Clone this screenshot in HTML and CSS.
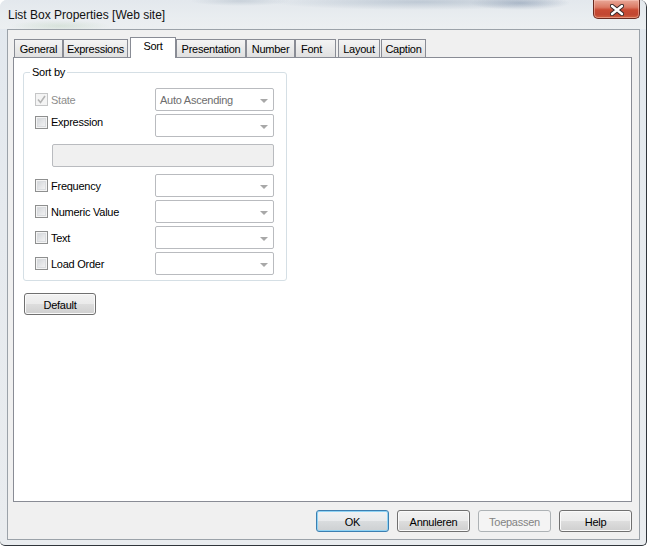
FILE: index.html
```html
<!DOCTYPE html>
<html>
<head>
<meta charset="utf-8">
<title>List Box Properties</title>
<link rel="stylesheet" href="styles.css">
</head>
<body>
<div class="window">
  <div class="titlebar">
    <span class="title">List Box Properties [Web site]</span>
    <div class="close">
      <svg width="14" height="12" viewBox="0 0 14 12">
        <path d="M2 2 L12 10 M12 2 L2 10" stroke="#3a2a2a" stroke-width="4.4" stroke-linecap="round"/>
        <path d="M2 2 L12 10 M12 2 L2 10" stroke="#ffffff" stroke-width="2.4" stroke-linecap="round"/>
      </svg>
    </div>
  </div>
  <div class="client">
    <div class="tabs">
      <div class="tab t-general">General</div>
      <div class="tab t-expr">Expressions</div>
      <div class="tab t-sort active">Sort</div>
      <div class="tab t-pres">Presentation</div>
      <div class="tab t-num">Number</div>
      <div class="tab t-font">Font</div>
      <div class="tab t-layout">Layout</div>
      <div class="tab t-caption">Caption</div>
    </div>
    <div class="panel">
      <fieldset class="group">
        <legend>Sort by</legend>
        <div class="rows">
          <div class="row">
            <span class="cb disabled checked">
              <svg width="9" height="9" viewBox="0 0 9 9"><path d="M1 4.5 L3.5 7.5 L8 1" fill="none" stroke="#b4b4b4" stroke-width="1.6"/></svg>
            </span>
            <span class="lbl muted">State</span>
            <div class="combo"><span class="combo-text">Auto Ascending</span><span class="arrow"></span></div>
          </div>
          <div class="row row-top">
            <span class="cb"></span>
            <span class="lbl">Expression</span>
            <div class="combo"><span class="combo-text"></span><span class="arrow"></span></div>
          </div>
          <div class="field"></div>
          <div class="row">
            <span class="cb"></span>
            <span class="lbl">Frequency</span>
            <div class="combo"><span class="combo-text"></span><span class="arrow"></span></div>
          </div>
          <div class="row">
            <span class="cb"></span>
            <span class="lbl">Numeric Value</span>
            <div class="combo"><span class="combo-text"></span><span class="arrow"></span></div>
          </div>
          <div class="row">
            <span class="cb"></span>
            <span class="lbl">Text</span>
            <div class="combo"><span class="combo-text"></span><span class="arrow"></span></div>
          </div>
          <div class="row">
            <span class="cb"></span>
            <span class="lbl">Load Order</span>
            <div class="combo"><span class="combo-text"></span><span class="arrow"></span></div>
          </div>
        </div>
      </fieldset>
      <button class="btn btn-default">Default</button>
    </div>
    <div class="footer">
      <button class="btn btn-foot btn-ok">OK</button>
      <button class="btn btn-foot">Annuleren</button>
      <button class="btn btn-foot btn-disabled">Toepassen</button>
      <button class="btn btn-foot">Help</button>
    </div>
  </div>
</div>
</body>
</html>
```
FILE: styles.css
```css
html, body {
  margin: 0;
  padding: 0;
  background: #ffffff;
}
body {
  font-family: "Liberation Sans", Arial, sans-serif;
  font-size: 11px;
  letter-spacing: -0.25px;
  color: #000;
}
.window {
  width: 647px;
  height: 546px;
  box-sizing: border-box;
  border-right: 1px solid #30353b;
  border-bottom: 1px solid #30353b;
  border-radius: 7px 7px 5px 5px;
  background: linear-gradient(180deg, #e2e8ee 0%, #e6eaee 40%, #e9ecef 100%);
  display: flex;
  flex-direction: column;
  overflow: hidden;
}
.titlebar {
  height: 29px;
  flex: none;
  display: flex;
  align-items: flex-start;
  justify-content: space-between;
  background:
    radial-gradient(ellipse 150px 8px at 420px 2px, rgba(130,150,172,0.38), rgba(130,150,172,0) 100%),
    radial-gradient(ellipse 50px 7px at 520px 3px, rgba(80,105,140,0.35), rgba(80,105,140,0) 100%),
    radial-gradient(ellipse 50px 5px at 240px 1px, rgba(120,140,160,0.25), rgba(120,140,160,0) 100%),
    radial-gradient(ellipse 50px 6px at 60px 26px, rgba(170,200,170,0.3), rgba(170,200,170,0) 100%),
    linear-gradient(180deg, #e3e8ed 0%, #e9edf0 60%, #eceff1 100%);
}
.title {
  margin: 8px 0 0 8px;
  font-size: 12px;
  line-height: 15px;
  letter-spacing: 0;
  color: #111;
}
.close {
  width: 47px;
  height: 19px;
  box-sizing: border-box;
  margin-right: 6px;
  border: 1px solid #6a2a20;
  border-top: none;
  border-radius: 0 0 5px 5px;
  background: linear-gradient(180deg, #e9a898 0%, #db7a65 40%, #c94a33 55%, #c24631 80%, #d0603f 100%);
  box-shadow: inset 0 0 0 1px rgba(255,210,200,0.45);
  display: flex;
  align-items: center;
  justify-content: center;
}
.close svg {
  display: block;
  margin-top: 1px;
}
.client {
  flex: none;
  height: 511px;
  margin: 0 6px 0 7px;
  box-sizing: border-box;
  border: 1px solid #9ba2a9;
  background: #f0f0f0;
  padding: 0 7px 0 5px;
  display: flex;
  flex-direction: column;
}
.tabs {
  height: 27px;
  flex: none;
  display: flex;
  align-items: flex-end;
  padding-left: 1px;
}
.tab {
  box-sizing: border-box;
  height: 18px;
  border: 1px solid #898c95;
  border-bottom: none;
  background: linear-gradient(180deg, #f4f4f4 0%, #eaeaea 50%, #e0e0e0 100%);
  line-height: 18px;
  text-align: center;
  white-space: nowrap;
}
.tab.active {
  height: 21px;
  background: #ffffff;
  margin-bottom: -1px;
  position: relative;
  z-index: 1;
  line-height: 17px;
}
.t-general { width: 49px; }
.t-expr { width: 65px; }
.t-sort { width: 46px; margin-left: 2px; }
.t-pres { width: 70px; }
.t-num { width: 49px; }
.t-font { width: 41px; text-align: left; padding-left: 5px; }
.t-layout { width: 42px; margin-left: 2px; }
.t-caption { width: 45px; margin-left: 1px; }
.panel {
  height: 445px;
  flex: none;
  box-sizing: border-box;
  border: 1px solid #898c95;
  background: #ffffff;
  display: flex;
  flex-direction: column;
  align-items: flex-start;
}
.group {
  box-sizing: border-box;
  width: 264px;
  margin: 8px 0 0 9px;
  padding: 0;
  border: 1px solid #d5dfe5;
  border-radius: 3px;
  min-inline-size: 0;
}
.group legend {
  margin-left: 6px;
  padding: 0 2px;
  line-height: 13px;
  color: #000;
}
.rows {
  display: flex;
  flex-direction: column;
  gap: 3px;
  padding: 9px 12px 5px 11px;
}
.row {
  height: 23px;
  display: flex;
  align-items: center;
}
.row-top {
  align-items: flex-start;
}
.row-top .cb {
  margin-top: 2px;
}
.cb {
  width: 13px;
  height: 13px;
  flex: none;
  box-sizing: border-box;
  border: 1px solid #8e8f8f;
  background: linear-gradient(135deg, #cbcfd3 0%, #e6e7e9 55%, #f8f8f8 100%);
  box-shadow: inset 0 0 0 1px #f4f4f4, inset 0 0 0 2px #dadcdf;
  display: flex;
  align-items: center;
  justify-content: center;
}
.cb.disabled {
  border-color: #c5c6c7;
  background: #f4f4f4;
  box-shadow: none;
}
.cb svg {
  display: block;
}
.lbl {
  flex: 1;
  margin-left: 3px;
  line-height: 13px;
  padding-top: 2px;
  white-space: nowrap;
}
.lbl.muted {
  color: #8d8d8d;
}
.combo {
  width: 119px;
  height: 23px;
  flex: none;
  box-sizing: border-box;
  border: 1px solid #b9bbbf;
  border-radius: 2px;
  background: #ffffff;
  display: flex;
  align-items: center;
  justify-content: space-between;
  padding: 0 5px 0 4px;
}
.combo-text {
  color: #6d6d6d;
  white-space: nowrap;
}
.arrow {
  width: 0;
  height: 0;
  border-left: 4px solid transparent;
  border-right: 4px solid transparent;
  border-top: 4px solid #a8a8a8;
  margin-top: 2px;
}
.field {
  height: 23px;
  width: 222px;
  box-sizing: border-box;
  margin: 4px 0 4px 17px;
  border: 1px solid #b9bbbf;
  border-radius: 2px;
  background: #f0f0f0;
}
.btn {
  font-family: "Liberation Sans", Arial, sans-serif;
  font-size: 11px;
  letter-spacing: -0.25px;
  color: #000;
  height: 22px;
  box-sizing: border-box;
  border: 1px solid #707070;
  border-radius: 3px;
  background: linear-gradient(180deg, #f2f2f2 0%, #ebebeb 48%, #dddddd 52%, #cfcfcf 100%);
  box-shadow: inset 0 0 0 1px #fafafa;
  padding: 1px 0 0 0;
  line-height: 18px;
}
.btn-default {
  width: 72px;
  margin: 12px 0 0 10px;
}
.footer {
  flex: none;
  display: flex;
  justify-content: flex-end;
  gap: 8px;
  padding: 8px 0 7px 0;
}
.btn-foot {
  width: 73px;
}
.btn-ok {
  border-color: #3c7fb1;
  box-shadow: inset 0 0 0 1px #8fd3f5;
  background: linear-gradient(180deg, #f0f2f4 0%, #e8eaec 48%, #d9dcde 52%, #cdd0d2 100%);
}
.btn-disabled {
  border-color: #adb2b5;
  background: #f4f4f4;
  box-shadow: none;
  color: #838383;
}
```
